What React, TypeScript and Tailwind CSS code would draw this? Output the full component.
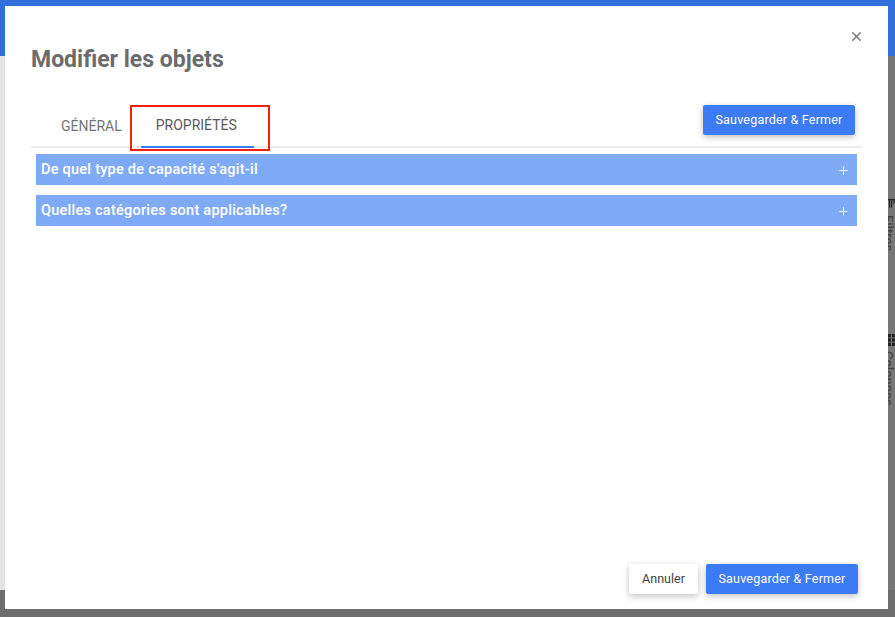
import { X, Plus } from "lucide-react";

const SECTIONS = ["De quel type de capacité s'agit-il", "Quelles catégories sont applicables?"];

function SaveButton() {
  return (
    <button
      type="button"
      className="h-[30px] w-[152px] rounded-[2px] bg-[#3b7bf3] text-[12.5px] tracking-[0.2px] text-white shadow-[0_2px_6px_rgba(0,0,0,0.25)]"
    >
      Sauvegarder &amp; Fermer
    </button>
  );
}

export default function App() {
  return (
    <div className="relative h-[617px] w-[895px] overflow-hidden bg-[#6e6e6e] font-['Roboto',sans-serif]">
      {/* Page behind the overlay */}
      <div className="h-14 bg-[#336fdc]" />
      <div className="flex h-[534px] justify-between">
        <div className="w-[5px] bg-[#e3e3e3]" />
        <div className="flex w-[7px] flex-col bg-[#777777] text-[13px] font-medium leading-[13px] text-[#444444]">
          <svg className="mt-[143px] shrink-0" width="7" height="11" viewBox="0 0 7 11" fill="#222222">
            <rect x="0" y="0" width="7" height="1.5" />
            <rect x="1" y="1.5" width="1.2" height="7" />
            <rect x="3" y="1.5" width="1.2" height="7" />
            <rect x="5.5" y="1.5" width="1.2" height="3" />
          </svg>
          <div className="ml-[-4px] mt-[5px] whitespace-nowrap [writing-mode:vertical-rl]">Filtres</div>
          <svg className="mt-[83px] shrink-0" width="7" height="12" viewBox="0 0 7 12" fill="#222222">
            <rect x="0" y="0" width="3" height="3.4" />
            <rect x="4" y="0" width="3" height="3.4" />
            <rect x="0" y="4.3" width="3" height="3.4" />
            <rect x="4" y="4.3" width="3" height="3.4" />
            <rect x="0" y="8.6" width="3" height="3.4" />
            <rect x="4" y="8.6" width="3" height="3.4" />
          </svg>
          <div className="ml-[-4px] mt-[5px] whitespace-nowrap [writing-mode:vertical-rl]">Colonnes</div>
        </div>
      </div>

      {/* Modal */}
      <div className="absolute left-[5px] top-[6px] flex h-[603px] w-[883px] flex-col bg-white px-[26px]">
        <button type="button" className="absolute right-[24px] top-[23px] text-[#757575]">
          <X size={15} strokeWidth={2.25} />
        </button>
        <h1 className="mt-[38px] text-[23px] font-bold leading-[32px] text-[#6b6b6b]">Modifier les objets</h1>

        <div className="mt-[28px] flex h-[44px] items-start justify-between border-b-2 border-[#ececec]">
          <div className="flex h-[44px] text-[14px]">
            <div className="ml-[30px] flex h-[44px] items-center text-[#757575]">GÉNÉRAL</div>
            <div className="ml-[19px] flex h-[44px] w-[113px] items-center justify-center border-b-2 border-[#3b7bf3] pr-[2px] text-[#5a5a5a]">
              PROPRIÉTÉS
            </div>
          </div>
          <div className="mr-[7px] mt-[1px]">
            <SaveButton />
          </div>
        </div>

        <div className="mt-[6px] flex flex-col gap-[10px] px-[5px]">
          {SECTIONS.map((title) => (
            <div key={title} className="flex h-[31px] items-center justify-between bg-[#7faaf6] pl-[5px] pr-[7px] text-white">
              <span className="text-[14.5px] font-medium tracking-[0.25px]">{title}</span>
              <Plus className="mt-[1px]" size={13} strokeWidth={1.75} />
            </div>
          ))}
        </div>

        <div className="mb-[15px] mt-auto flex justify-end gap-2 pr-[4px]">
          <button
            type="button"
            className="h-[30px] w-[69px] rounded-[2px] bg-white text-[12.5px] text-[#424242] shadow-[0_2px_6px_rgba(0,0,0,0.25)]"
          >
            Annuler
          </button>
          <SaveButton />
        </div>
      </div>

      {/* Red highlight around the tab */}
      <div className="pointer-events-none absolute left-[130px] top-[105px] h-[46px] w-[140px] border-2 border-[#f5200c]" />
    </div>
  );
}
